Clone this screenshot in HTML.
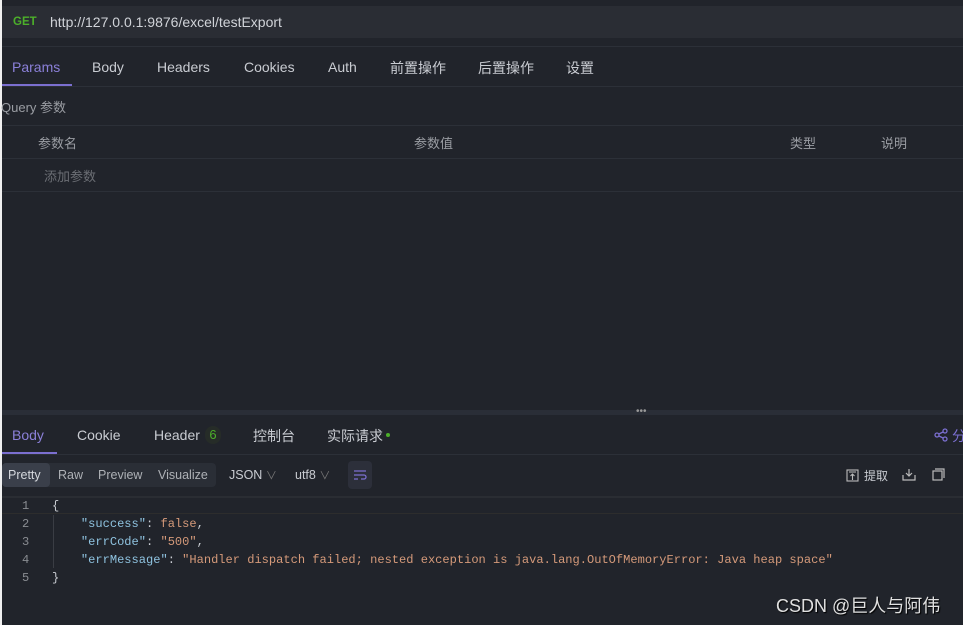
<!DOCTYPE html><html><head><meta charset="utf-8"><style>
body{margin:0;width:963px;height:625px;background:#21242b;font-family:"Liberation Sans","Noto Sans CJK SC",sans-serif;color:#c9ccd2;position:relative;overflow:hidden;font-size:14px}
.a{position:absolute;white-space:nowrap}
.strip{left:0;top:0;width:2px;height:625px;background:#f0f0f0}
.line{position:absolute;left:2px;right:0;height:1px;background:#2c3038}
.mono{font-family:"Liberation Mono","DejaVu Sans Mono",monospace;font-size:12.05px}
.k{color:#8fc3e0}.s{color:#d59a7a}
</style></head><body>
<div class="a strip"></div>
<div class="a" style="left:2px;top:6px;width:961px;height:32px;background:#2a2d34"></div>
<div class="a" style="left:13px;top:16px;color:#4caf2a;font-weight:bold;font-size:11.5px">GET</div>
<div class="a" style="left:50px;top:14px;font-size:14px;color:#d0d3d8">http://127.0.0.1:9876/excel/testExport</div>
<div class="line" style="top:46px"></div>
<div class="a" style="left:12px;top:59px;color:#8b80d9">Params</div>
<div class="a" style="left:2px;top:84px;width:70px;height:3px;background:#7b6fd0"></div>
<div class="a" style="left:92px;top:59px">Body</div>
<div class="a" style="left:157px;top:59px">Headers</div>
<div class="a" style="left:244px;top:59px">Cookies</div>
<div class="a" style="left:328px;top:59px">Auth</div>
<div class="a" style="left:390px;top:58px">前置操作</div>
<div class="a" style="left:478px;top:58px">后置操作</div>
<div class="a" style="left:566px;top:58px">设置</div>
<div class="line" style="top:86px"></div>
<div class="a" style="left:1px;top:97px;color:#9a9da3;font-size:13px">Query 参数</div>
<div class="line" style="top:125px"></div>
<div class="a" style="left:38px;top:133px;color:#9a9da3;font-size:13px">参数名</div>
<div class="a" style="left:414px;top:133px;color:#9a9da3;font-size:13px">参数值</div>
<div class="a" style="left:790px;top:133px;color:#9a9da3;font-size:13px">类型</div>
<div class="a" style="left:881px;top:133px;color:#9a9da3;font-size:13px">说明</div>
<div class="line" style="top:158px"></div>
<div class="a" style="left:44px;top:166px;color:#6b6e74;font-size:13px">添加参数</div>
<div class="line" style="top:191px"></div>
<div class="a" style="left:2px;top:410px;width:961px;height:5px;background:#2a2e37"></div>
<div class="a" style="left:636px;top:406px;color:#999;font-size:10px">•••</div>
<div class="a" style="left:12px;top:427px;color:#8b80d9">Body</div>
<div class="a" style="left:2px;top:452px;width:55px;height:3px;background:#7b6fd0"></div>
<div class="a" style="left:77px;top:427px">Cookie</div>
<div class="a" style="left:154px;top:427px">Header</div>
<div class="a" style="left:205px;top:426px;width:16px;height:18px;border-radius:9px;background:#262c28;color:#4caf2a;text-align:center;font-size:13px;line-height:18px">6</div>
<div class="a" style="left:253px;top:426px">控制台</div>
<div class="a" style="left:327px;top:426px">实际请求</div>
<div class="a" style="left:386px;top:433px;width:4px;height:4px;border-radius:2px;background:#4caf2a"></div>
<svg class="a" style="left:934px;top:428px" width="14" height="14" viewBox="0 0 14 14" fill="none" stroke="#7b6fd0" stroke-width="1.3"><circle cx="3" cy="7" r="2"/><circle cx="11" cy="3" r="2"/><circle cx="11" cy="11" r="2"/><path d="M5 6l4-2M5 8l4 2"/></svg>
<div class="a" style="left:952px;top:426px;color:#7b6fd0">分</div>
<div class="line" style="top:454px"></div>
<div class="a" style="left:2px;top:463px;width:214px;height:24px;background:#2a2e36;border-radius:4px"></div>
<div class="a" style="left:2px;top:463px;width:48px;height:24px;background:#3a3f4a;border-radius:4px"></div>
<div class="a" style="left:8px;top:468px;font-size:12.5px;color:#d5d8dd">Pretty</div>
<div class="a" style="left:58px;top:468px;font-size:12.5px;color:#aeb1b6">Raw</div>
<div class="a" style="left:98px;top:468px;font-size:12.5px;color:#aeb1b6">Preview</div>
<div class="a" style="left:158px;top:468px;font-size:12.5px;color:#aeb1b6">Visualize</div>
<div class="a" style="left:229px;top:467px;font-size:12.5px;color:#c9ccd2;line-height:16px">JSON <span style="color:#777;font-size:11px">∨</span></div>
<div class="a" style="left:295px;top:467px;font-size:12.5px;color:#c9ccd2;line-height:16px">utf8 <span style="color:#777;font-size:11px">∨</span></div>
<div class="a" style="left:348px;top:461px;width:24px;height:28px;background:#2c2f3a;border-radius:4px"></div>
<svg class="a" style="left:353px;top:469px" width="14" height="12" viewBox="0 0 14 12" fill="none" stroke="#7b6fd0" stroke-width="1.3"><path d="M1 2h12M1 6h10a2 2 0 010 4H8M1 10h4"/></svg>
<svg class="a" style="left:846px;top:469px" width="13" height="13" viewBox="0 0 13 13" fill="none" stroke="#bbb" stroke-width="1.1"><rect x="1" y="1" width="11" height="11"/><path d="M3 3h7M6.5 11V5M4.5 7l2-2 2 2"/></svg>
<div class="a" style="left:864px;top:467px;font-size:12px">提取</div>
<svg class="a" style="left:902px;top:468px" width="14" height="13" viewBox="0 0 14 13" fill="none" stroke="#bbb" stroke-width="1.2"><path d="M1 7v5h12V7M7 1v7M4 5l3 3 3-3"/></svg>
<svg class="a" style="left:932px;top:468px" width="13" height="13" viewBox="0 0 13 13" fill="none" stroke="#bbb" stroke-width="1.2"><rect x="1" y="3" width="9" height="9"/><path d="M3 1h9v9"/></svg>
<div class="line" style="top:496px;height:2px;background:#2a2d33"></div>
<div class="line" style="top:513px;background:#2d2d2d"></div>
<div class="a" style="left:53px;top:515px;width:1px;height:53px;background:#3a3d44"></div>
<div class="a mono" style="left:22px;top:497px;line-height:18px;color:#8a8d92">1<br>2<br>3<br>4<br>5</div>
<div class="a mono" style="left:52px;top:497px;line-height:18px;color:#c9ccd2">{<br>&nbsp;&nbsp;&nbsp;&nbsp;<span class="k">"success"</span>: <span class="s">false</span>,<br>&nbsp;&nbsp;&nbsp;&nbsp;<span class="k">"errCode"</span>: <span class="s">"500"</span>,<br>&nbsp;&nbsp;&nbsp;&nbsp;<span class="k">"errMessage"</span>: <span class="s">"Handler dispatch failed; nested exception is java.lang.OutOfMemoryError: Java heap space"</span><br>}</div>
<div class="a" style="left:776px;top:592px;font-size:18px;color:#e0e0e0;text-shadow:1px 1px 1px #000">CSDN @巨人与阿伟</div>
</body></html>
